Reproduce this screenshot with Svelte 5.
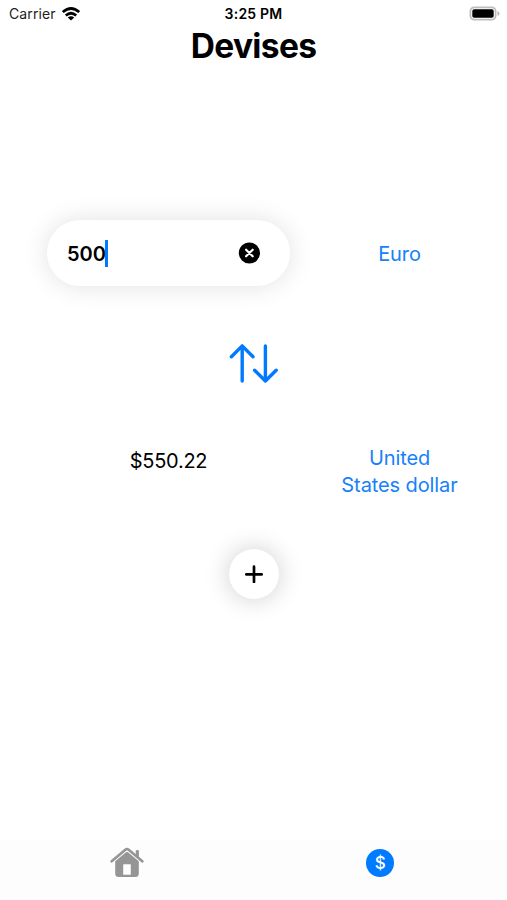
<script>
  let amount = $state('500');
  const result = '$550.22';
</script>

<div class="screen">
  <header class="status">
    <div class="carrier">
      <span>Carrier</span>
      <svg width="18" height="14" viewBox="0 0 18 14" fill="none" stroke="#000" stroke-width="2.7">
        <path d="M0.8 5.1Q9 -2.1 17.2 5.1" />
        <path d="M3.8 8.5Q9 4 14.2 8.5" />
        <path d="M9 13.6L5.8 10.5Q9 7.8 12.2 10.5Z" fill="#000" stroke="none" />
      </svg>
    </div>
    <span class="time">3:25 PM</span>
    <div class="battery">
      <svg width="32" height="16" viewBox="0 0 32 16">
        <rect x="1.4" y="1.3" width="25.2" height="12.4" rx="4" fill="#fff" stroke="#bdbdbd" stroke-width="1.8" />
        <rect x="3.3" y="3.2" width="21.4" height="8.6" rx="1.8" fill="#000" />
        <path d="M28.5 5.1Q30.5 5.7 30.5 7.5T28.5 9.9Z" fill="#b5b5b5" />
      </svg>
    </div>
  </header>

  <h1>Devises</h1>

  <main>
    <div class="row source">
      <div class="field">
        <span class="amount">{amount}</span><i class="caret"></i>
        <button class="clear" aria-label="Clear" onclick={() => (amount = '')}>
          <svg width="22" height="22" viewBox="0 0 22 22">
            <circle cx="11.4" cy="11" r="10.6" fill="#000" />
            <path d="M8.1 7.7L14.7 14.3M14.7 7.7L8.1 14.3" stroke="#fff" stroke-width="2.2" stroke-linecap="round" />
          </svg>
        </button>
      </div>
      <button class="currency euro">Euro</button>
    </div>

    <button class="swap" aria-label="Swap">
      <svg width="50" height="40" viewBox="0 0 50 40" fill="none" stroke="#007aff" stroke-width="3.4" stroke-linecap="round" stroke-linejoin="round">
        <path d="M13.2 38V2.9M2.4 13.7L13.2 2.9L24 13.7" />
        <path d="M36.4 2.9V38M25.6 27.2L36.4 38L47.2 27.2" />
      </svg>
    </button>

    <div class="row target">
      <span class="result">{result}</span>
      <button class="currency dollar">United<br />States dollar</button>
    </div>

    <button class="add" aria-label="Add">
      <svg width="18" height="18" viewBox="0 0 18 18" stroke="#000" stroke-width="2.7" stroke-linecap="round">
        <path d="M9 1.7V17M1.3 9.4H16.7" />
      </svg>
    </button>
  </main>

  <nav>
    <button aria-label="Home">
      <svg width="34" height="32" viewBox="0 0 34 32">
        <path d="M1.7 14.3L15.3 2.7Q17 1.4 18.7 2.7L32.3 14.3" fill="none" stroke="#959595" stroke-width="2.6" stroke-linecap="round" />
        <path d="M25.8 4.2Q25.8 3 27 3H27.7Q28.9 3 28.9 4.2V10.3L25.8 7.7Z" fill="#959595" />
        <path fill-rule="evenodd" d="M5.2 14.3L16 5.3Q17 4.6 18 5.3L28.8 14.3V26.5Q28.8 30 25.3 30H8.7Q5.2 30 5.2 26.5ZM13.8 17.2Q13.2 17.2 13.2 17.8V27.8H20.8V17.8Q20.8 17.2 20.2 17.2Z" fill="#959595" />
      </svg>
    </button>
    <button aria-label="Currencies">
      <span class="coin">$</span>
    </button>
  </nav>
</div>

<style>
  :global(body) {
    margin: 0;
    background: #fff;
  }
  .screen {
    width: 507px;
    height: 900px;
    display: flex;
    flex-direction: column;
    background: #fff;
    color: #000;
    font-family: Inter, 'Liberation Sans', sans-serif;
    overflow: hidden;
  }
  button {
    border: 0;
    padding: 0;
    background: none;
    font: inherit;
    color: inherit;
    display: flex;
    align-items: center;
    justify-content: center;
  }
  svg {
    display: block;
  }
  .status {
    height: 27px;
    display: grid;
    grid-template-columns: 1fr auto 1fr;
    align-items: center;
    font-size: 14px;
  }
  .carrier {
    display: flex;
    align-items: center;
    gap: 6px;
    padding-left: 9px;
    color: #222;
    letter-spacing: 0.1px;
  }
  .time {
    font-weight: 600;
    letter-spacing: 0.2px;
  }
  .battery {
    display: flex;
    justify-content: flex-end;
    padding-right: 6px;
  }
  h1 {
    margin: 0;
    height: 38px;
    line-height: 39px;
    text-align: center;
    font-size: 33.5px;
    font-weight: 700;
    letter-spacing: -0.65px;
  }
  main {
    flex: 1;
    display: flex;
    flex-direction: column;
    align-items: center;
    padding-top: 155px;
  }
  .row {
    width: 100%;
    box-sizing: border-box;
    display: grid;
    grid-template-columns: 243px 179px;
    column-gap: 20px;
    padding-left: 47px;
  }
  .field {
    height: 66px;
    box-sizing: border-box;
    padding: 0 30px 0 20px;
    display: flex;
    align-items: center;
    border-radius: 33px;
    background: #fff;
    box-shadow: 0 0 26px rgba(0, 0, 0, 0.12);
  }
  .amount {
    font-size: 20px;
    font-weight: 600;
    padding-top: 2px;
  }
  .caret {
    width: 3px;
    height: 27px;
    margin-left: -1px;
    background: #007aff;
  }
  .clear {
    margin-left: auto;
  }
  .currency {
    color: #1581fa;
    font-size: 20px;
    line-height: 27px;
    text-align: center;
    letter-spacing: -0.1px;
    padding-top: 2px;
  }
  .swap {
    margin-top: 57px;
  }
  .target {
    margin-top: 60px;
  }
  .result {
    font-size: 20px;
    line-height: 27px;
    text-align: center;
    padding-top: 5px;
    letter-spacing: -0.25px;
  }
  .add {
    width: 50px;
    height: 50px;
    margin-top: 50px;
    border-radius: 50%;
    background: #fff;
    box-shadow: 0 0 26px rgba(0, 0, 0, 0.2);
  }
  nav {
    height: 60px;
    display: grid;
    grid-template-columns: 1fr 1fr;
    background: #fdfdfd;
  }
  nav button {
    height: 46px;
  }
  .coin {
    width: 28px;
    height: 28px;
    border-radius: 50%;
    background: #007aff;
    color: #fff;
    font-size: 17px;
    line-height: 29px;
    font-weight: 500;
    text-align: center;
  }
</style>
